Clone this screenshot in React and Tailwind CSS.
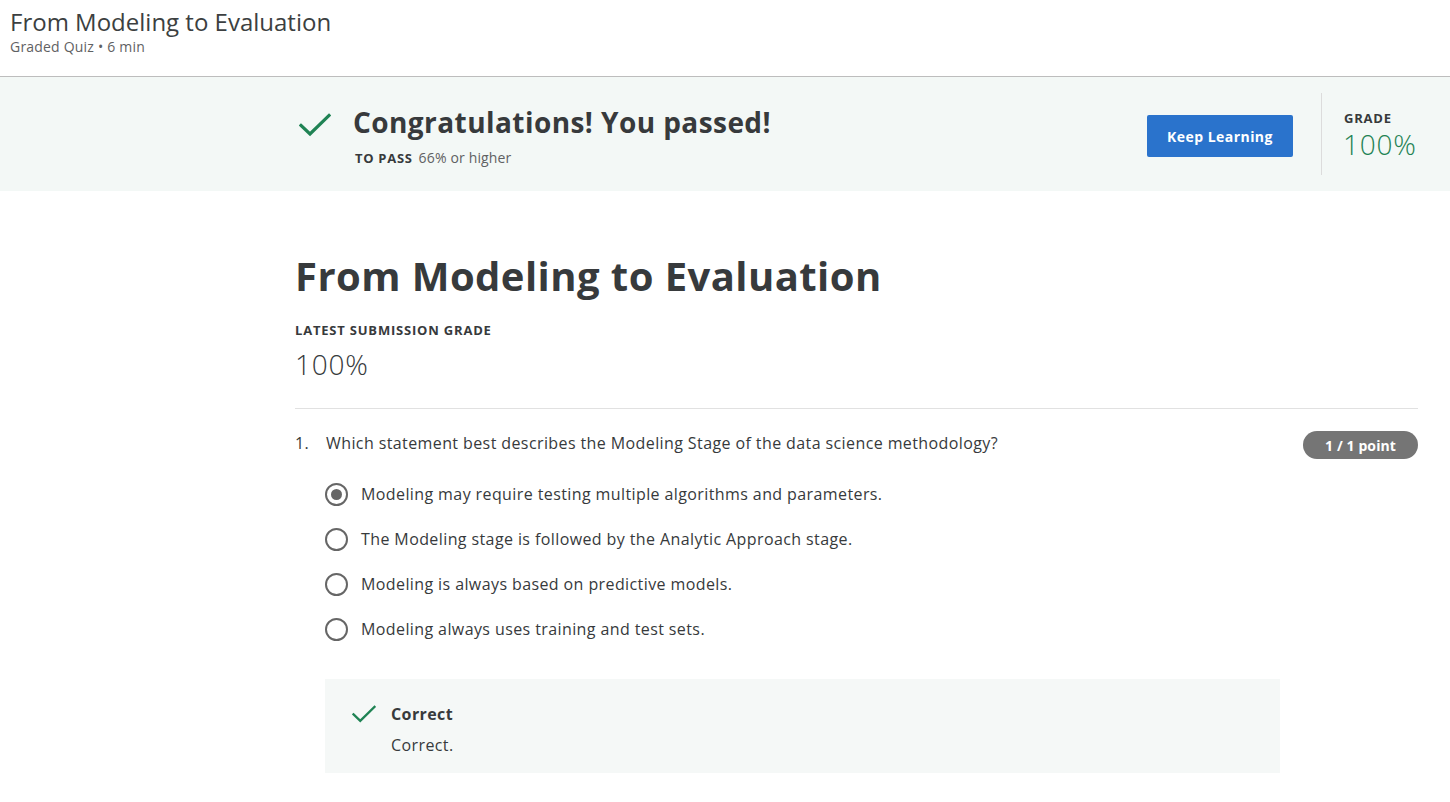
import React from 'react';

const font = { fontFamily: '"Open Sans", "Liberation Sans", sans-serif' };

const CheckIcon = ({ className }) => (
  <svg viewBox="0 0 32 24" className={className} fill="none">
    <path d="M2 12.5 L11 21 L30 2.5" stroke="#1f8354" strokeWidth="3.2" strokeLinecap="square" strokeLinejoin="miter" />
  </svg>
);

const Radio = ({ checked }) => (
  <span className="w-[23px] h-[23px] rounded-full border-2 border-[#666666] flex items-center justify-center shrink-0">
    {checked && <span className="w-[11px] h-[11px] rounded-full bg-[#666666]" />}
  </span>
);

const OPTIONS = [
  { text: 'Modeling may require testing multiple algorithms and parameters.', checked: true },
  { text: 'The Modeling stage is followed by the Analytic Approach stage.' },
  { text: 'Modeling is always based on predictive models.' },
  { text: 'Modeling always uses training and test sets.' },
];

export default function App() {
  return (
    <div className="min-h-screen bg-white text-[#373a3c]" style={font}>
      {/* Top header */}
      <div className="h-[77px] border-b border-[#bdbdbd] pl-[10px] pt-[7px]">
        <h1 className="text-[24px] leading-[30px] font-normal text-[#3c3f41]">From Modeling to Evaluation</h1>
        <p className="mt-[1px] text-[14px] leading-[18px] tracking-[0.2px] text-[#5f6163]">Graded Quiz • 6 min</p>
      </div>

      {/* Pass banner */}
      <div className="h-[114px] bg-[#f3f8f6] flex items-center pl-[299px] pr-[32px]">
        <CheckIcon className="w-[32px] h-[24px] self-start mt-[36px]" />
        <div className="ml-[22px] flex-1 mt-[4px]">
          <h2 className="text-[28px] leading-[36px] font-bold tracking-[0.43px] text-[#373a3c]">Congratulations! You passed!</h2>
          <p className="mt-[8px] text-[14px] leading-[20px] pl-[2px]">
            <span className="text-[13px] font-bold tracking-[0.7px] mr-[6px]">TO PASS</span>
            <span className="text-[#5f6163] tracking-[0.15px]">66% or higher</span>
          </p>
        </div>
        <button className="w-[146px] h-[42px] mt-[4px] ml-[1px] bg-[#2a73cc] rounded-[2px] text-white text-[14px] font-bold tracking-[0.45px]">
          Keep Learning
        </button>
        <div className="w-px h-[82px] bg-[#dcdcdc] ml-[28px]" />
        <div className="ml-[22px] w-[74px] mt-[3px]">
          <div className="text-[13px] leading-[16px] font-bold tracking-[0.8px] text-[#373a3c]">GRADE</div>
          <div className="text-[28px] leading-[36px] font-light tracking-[0.75px] text-[#1f8354] -ml-[1px]">100%</div>
        </div>
      </div>

      {/* Main content */}
      <div className="pl-[295px] pr-[32px] tracking-[0.4px]">
        <h1 className="mt-[61px] text-[40px] leading-[48px] font-bold tracking-[0.44px] text-[#373a3c]">From Modeling to Evaluation</h1>
        <div className="mt-[22px] text-[13px] leading-[16px] font-bold tracking-[0.8px]">LATEST SUBMISSION GRADE</div>
        <div className="mt-[8px] text-[28px] leading-[36px] font-light tracking-[0.75px]">100%</div>
        <div className="mt-[26px] border-t border-[#e1e1e1]" />

        {/* Question */}
        <div className="mt-[22px] flex items-start">
          <span className="w-[31px] text-[16px] leading-[24px]">1.</span>
          <p className="flex-1 text-[16px] leading-[24px]">
            Which statement best describes the Modeling Stage of the data science methodology?
          </p>
          <span className="h-[28px] px-[22px] rounded-full bg-[#757575] text-white text-[14px] font-bold tracking-[0.1px] flex items-center">
            1 / 1 point
          </span>
        </div>

        <div className="ml-[30px] mt-[23px] flex flex-col gap-[21px]">
          {OPTIONS.map((o) => (
            <label key={o.text} className="flex items-center gap-[13px] h-[24px]">
              <Radio checked={o.checked} />
              <span className="text-[16px] leading-[24px]">{o.text}</span>
            </label>
          ))}
        </div>

        {/* Feedback */}
        <div className="ml-[30px] mt-[38px] w-[955px] h-[94px] bg-[#f5f8f7] pl-[27px] pt-[23px]">
          <div className="flex items-center">
            <CheckIcon className="w-[24px] h-[18px]" />
            <span className="ml-[15px] text-[16px] leading-[24px] font-bold">Correct</span>
          </div>
          <p className="ml-[39px] mt-[7px] text-[16px] leading-[24px]">Correct.</p>
        </div>
      </div>
    </div>
  );
}
